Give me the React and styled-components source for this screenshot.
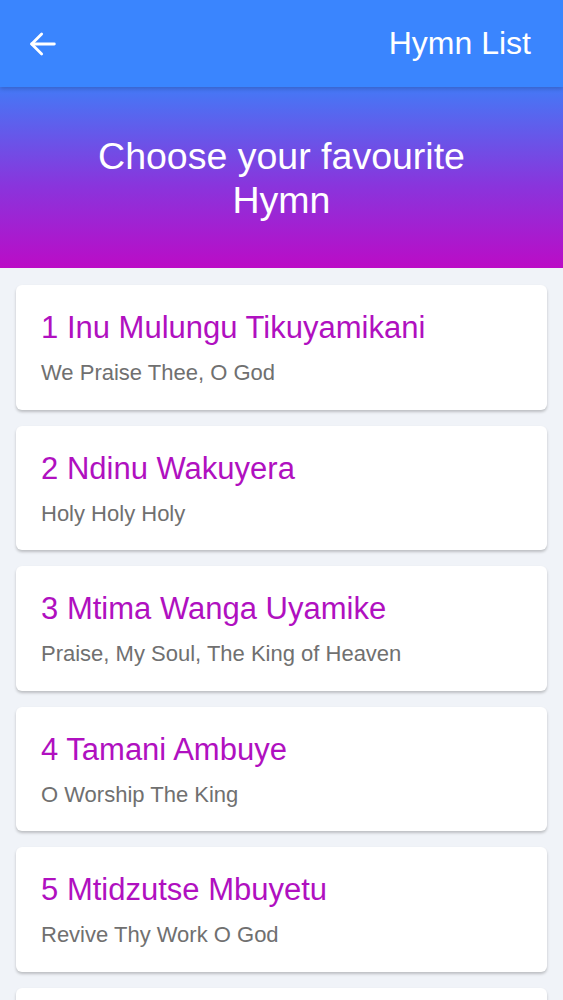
import styled, { createGlobalStyle } from 'styled-components';

const hymns = [
  { number: 1, name: 'Inu Mulungu Tikuyamikani', english: 'We Praise Thee, O God' },
  { number: 2, name: 'Ndinu Wakuyera', english: 'Holy Holy Holy' },
  { number: 3, name: 'Mtima Wanga Uyamike', english: 'Praise, My Soul, The King of Heaven' },
  { number: 4, name: 'Tamani Ambuye', english: 'O Worship The King' },
  { number: 5, name: 'Mtidzutse Mbuyetu', english: 'Revive Thy Work O God' },
  { number: 6, name: 'Tiyamike Mulungu', english: 'Now Thank We All Our God' },
];

export default function App() {
  return (
    <>
      <GlobalStyle />
      <Page>
        <TopBar>
          <BackButton aria-label="Back">
            <svg width="32" height="32" viewBox="0 0 24 24" fill="none" stroke="#fff" strokeWidth="2.1" strokeLinecap="round" strokeLinejoin="round">
              <path d="M20.5 12H3.5" />
              <path d="M11 4.5L3.5 12l7.5 7.5" />
            </svg>
          </BackButton>
          <TopTitle>Hymn List</TopTitle>
        </TopBar>
        <Hero>
          <HeroText>Choose your favourite<br />Hymn</HeroText>
        </Hero>
        <List>
          {hymns.map((h) => (
            <Card key={h.number}>
              <HymnTitle>{h.number} {h.name}</HymnTitle>
              <HymnSub>{h.english}</HymnSub>
            </Card>
          ))}
        </List>
      </Page>
    </>
  );
}

const GlobalStyle = createGlobalStyle`
  html, body {
    margin: 0;
    padding: 0;
    background: #f0f3f8;
    font-family: "Liberation Sans", Arial, sans-serif;
  }
`;

const Page = styled.div`
  height: 1000px;
  overflow: hidden;
  background: #f0f3f8;
`;

const TopBar = styled.header`
  height: 87px;
  background: #3a85fe;
  display: flex;
  align-items: center;
  justify-content: space-between;
  padding: 0 32px 0 27px;
  box-sizing: border-box;
  position: relative;
  z-index: 2;
  box-shadow: 0 2px 4px rgba(0, 0, 0, 0.18);
`;

const BackButton = styled.button`
  background: none;
  border: none;
  padding: 0;
  display: flex;
`;

const TopTitle = styled.h1`
  margin: 0;
  color: #fff;
  font-size: 32px;
  font-weight: 400;
`;

const Hero = styled.section`
  height: 181px;
  background: linear-gradient(180deg, #4479f6 0%, #8a34dc 55%, #bb0cc6 100%);
  display: flex;
  align-items: center;
  justify-content: center;
`;

const HeroText = styled.h2`
  margin: 0;
  color: #fff;
  font-size: 37.5px;
  font-weight: 400;
  line-height: 44px;
  text-align: center;
`;

const List = styled.main`
  display: flex;
  flex-direction: column;
  gap: 16px;
  padding: 17px 16px 0;
`;

const Card = styled.article`
  background: #fff;
  border-radius: 6px;
  height: 124.5px;
  box-sizing: border-box;
  padding: 26px 25px 0;
  box-shadow: 0 2px 3px rgba(0, 0, 0, 0.22);
  flex-shrink: 0;
`;

const HymnTitle = styled.div`
  color: #b010c0;
  font-size: 31px;
  line-height: 34px;
`;

const HymnSub = styled.div`
  margin-top: 15px;
  color: #707070;
  font-size: 22px;
  line-height: 26px;
`;
